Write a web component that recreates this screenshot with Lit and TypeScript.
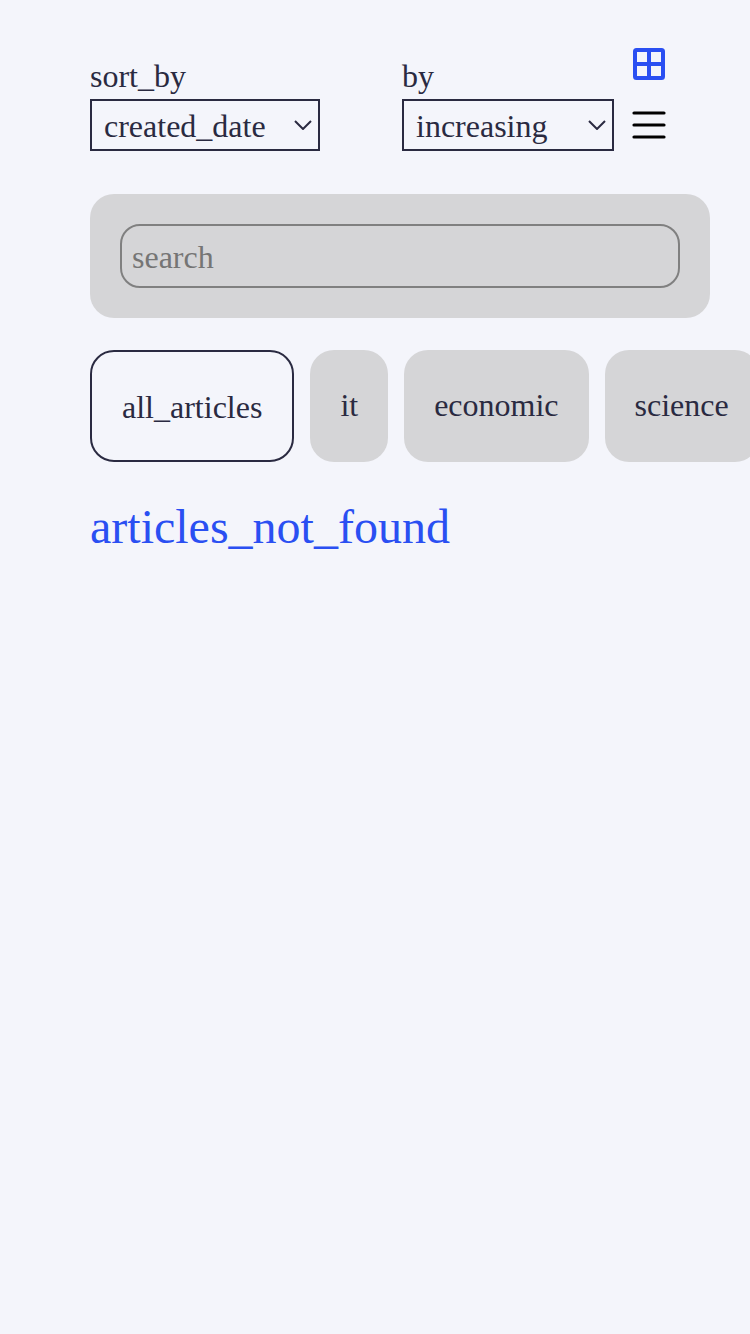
import { LitElement, html, css, svg } from "lit";
import { customElement, state } from "lit/decorators.js";

type View = "tile" | "list";

const chevron = svg`<svg class="chevron" viewBox="0 0 18 10" aria-hidden="true"><path d="M1 1 L9 9 L17 1" /></svg>`;

@customElement("app-root")
export class AppRoot extends LitElement {
  @state() private view: View = "tile";
  @state() private category = "all_articles";

  private categories = ["all_articles", "it", "economic", "science"];

  static styles = css`
    :host {
      --bg: #f4f5fb;
      --ink: #2a2a41;
      --card: #d5d5d7;
      --accent: #2a4ff2;
      display: block;
      min-height: 100vh;
      box-sizing: border-box;
      padding: 44px 40px 40px 90px;
      overflow: hidden;
      background: var(--bg);
      color: var(--ink);
      font: 32px "Liberation Serif", "Times New Roman", serif;
    }
    *,
    *::before {
      box-sizing: border-box;
    }
    button,
    select,
    input {
      font: inherit;
      color: inherit;
      margin: 0;
    }
    .page {
      display: flex;
      flex-direction: column;
      gap: 32px;
    }
    .toolbar {
      display: flex;
      align-items: flex-start;
      padding-bottom: 11px;
    }
    .sorting {
      display: flex;
      gap: 82px;
      padding-top: 9px;
    }
    .field {
      display: flex;
      flex-direction: column;
    }
    .label {
      line-height: 46px;
    }
    .picker {
      display: grid;
      align-items: center;
    }
    .picker > * {
      grid-area: 1 / 1;
    }
    .select {
      appearance: none;
      height: 52px;
      min-width: 212px;
      padding: 2px 52px 0 12px;
      border: 2px solid var(--ink);
      border-radius: 0;
      background: transparent;
    }
    .chevron {
      justify-self: end;
      width: 18px;
      height: 10px;
      margin-right: 8px;
      fill: none;
      stroke: var(--ink);
      stroke-width: 2;
      pointer-events: none;
    }
    .views {
      display: flex;
      flex-direction: column;
      gap: 20px;
      margin-left: 15px;
    }
    .view {
      display: block;
      width: 40px;
      height: 40px;
      padding: 0;
      border: 0;
      background: none;
      color: #000;
      cursor: pointer;
    }
    .view.active {
      color: var(--accent);
    }
    .view svg {
      display: block;
      width: 40px;
      height: 40px;
      fill: none;
      stroke: currentColor;
    }
    .search {
      padding: 30px;
      border-radius: 24px;
      background: var(--card);
    }
    .input {
      display: block;
      width: 100%;
      height: 64px;
      padding: 2px 10px 0;
      border: 2px solid #808080;
      border-radius: 20px;
      background: transparent;
    }
    .input::placeholder {
      color: #757575;
    }
    .tabs {
      display: flex;
      gap: 16px;
      margin-right: -40px;
      overflow-x: auto;
      scrollbar-width: none;
    }
    .tab {
      flex: none;
      padding: 30px 30px 32px;
      border: 0;
      border-radius: 24px;
      background: var(--card);
      line-height: 50px;
      cursor: pointer;
    }
    .tab.active {
      padding: 30px 30px 28px;
      border: 2px solid var(--ink);
      background: transparent;
    }
    .empty {
      margin: 0;
      color: var(--accent);
      font-size: 48px;
      font-weight: 400;
      line-height: 66px;
    }
  `;

  render() {
    return html`
      <main class="page">
        <div class="toolbar">
          <div class="sorting">
            <div class="field">
              <label class="label" for="sort">sort_by</label>
              <div class="picker">
                <select class="select" id="sort">
                  <option>created_date</option>
                  <option>title</option>
                  <option>views</option>
                </select>
                ${chevron}
              </div>
            </div>
            <div class="field">
              <label class="label" for="order">by</label>
              <div class="picker">
                <select class="select" id="order">
                  <option>increasing</option>
                  <option>decreasing</option>
                </select>
                ${chevron}
              </div>
            </div>
          </div>
          <div class="views">
            <button
              class="view ${this.view === "tile" ? "active" : ""}"
              aria-label="tile"
              @click=${() => (this.view = "tile")}
            >
              <svg viewBox="0 0 40 40">
                <rect x="6" y="6" width="28" height="28" rx="1.5" stroke-width="4" />
                <path d="M20 6V34M6 20H34" stroke-width="4" />
              </svg>
            </button>
            <button
              class="view ${this.view === "list" ? "active" : ""}"
              aria-label="list"
              @click=${() => (this.view = "list")}
            >
              <svg viewBox="0 0 40 40">
                <path
                  d="M5 9H35M5 21H35M5 33H35"
                  stroke-width="3.2"
                  stroke-linecap="round"
                />
              </svg>
            </button>
          </div>
        </div>
        <div class="search">
          <input class="input" type="text" placeholder="search" aria-label="search" />
        </div>
        <div class="tabs">
          ${this.categories.map(
            (name) => html`<button
              class="tab ${name === this.category ? "active" : ""}"
              @click=${() => (this.category = name)}
            >${name}</button>`
          )}
        </div>
        <h1 class="empty">articles_not_found</h1>
      </main>
    `;
  }
}
